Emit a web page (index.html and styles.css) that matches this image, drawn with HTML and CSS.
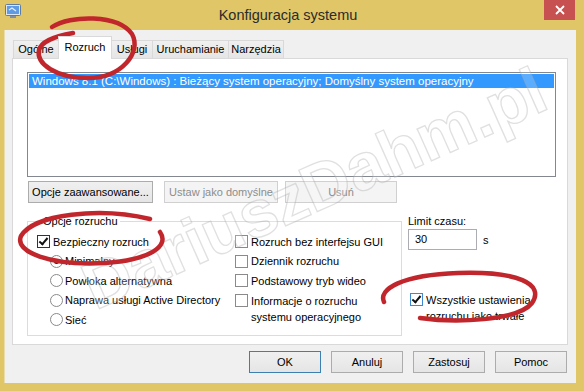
FILE: index.html
```html
<!DOCTYPE html>
<html>
<head>
    <title>Konfiguracja systemu</title>
    <link rel="stylesheet" href="styles.css">
</head>
<body>
<div class="window">
    <div class="titlebar">
        <svg class="app-icon" width="16" height="14" viewBox="0 0 16 14">
            <rect x="0.5" y="0.5" width="15" height="11" rx="1" fill="#dfe6ef" stroke="#5d7ba3"/>
            <rect x="2" y="2" width="12" height="8" fill="#5f9be3"/>
            <path d="M4 6 L7 4 L11 7" stroke="#dcefff" stroke-width="1.2" fill="none"/>
            <rect x="5" y="12" width="6" height="2" fill="#7c8ea8"/>
        </svg>
        <div class="title">Konfiguracja systemu</div>
        <div class="close">
            <svg width="10" height="10" viewBox="0 0 10 10">
                <path d="M1 1 L9 9 M9 1 L1 9" stroke="#fff" stroke-width="1.8"/>
            </svg>
        </div>
    </div>

    <div class="client">
        <div class="tabs">
            <div class="tab w-ogolne">Ogólne</div>
            <div class="tab active">Rozruch</div>
            <div class="tab w-uslugi">Usługi</div>
            <div class="tab w-uruch">Uruchamianie</div>
            <div class="tab w-narz">Narzędzia</div>
        </div>

        <div class="panel">
            <div class="os-list">
                <div class="os-item selected">Windows 8.1 (C:\Windows) : Bieżący system operacyjny; Domyślny system operacyjny</div>
            </div>

            <div class="list-buttons">
                <div class="btn btn-advanced">Opcje zaawansowane...</div>
                <div class="btn disabled btn-default">Ustaw jako domyślne</div>
                <div class="btn disabled btn-remove">Usuń</div>
            </div>

            <div class="lower">
                <fieldset class="group">
                    <legend>Opcje rozruchu</legend>
                    <div class="col col-left">
                        <div class="opt"><span class="check checked"></span>Bezpieczny rozruch</div>
                        <div class="opt sub"><span class="radio on"></span>Minimalny</div>
                        <div class="opt sub"><span class="radio"></span>Powłoka alternatywna</div>
                        <div class="opt sub"><span class="radio"></span>Naprawa usługi Active Directory</div>
                        <div class="opt sub"><span class="radio"></span>Sieć</div>
                    </div>
                    <div class="col">
                        <div class="opt"><span class="check"></span>Rozruch bez interfejsu GUI</div>
                        <div class="opt"><span class="check"></span>Dziennik rozruchu</div>
                        <div class="opt"><span class="check"></span>Podstawowy tryb wideo</div>
                        <div class="opt multi"><span class="check"></span><span>Informacje o rozruchu<br>systemu operacyjnego</span></div>
                    </div>
                </fieldset>

                <div class="side">
                    <div class="side-label">Limit czasu:</div>
                    <div class="timeout">
                        <div class="input">30</div>
                        <span>s</span>
                    </div>
                    <div class="opt multi persist"><span class="check checked hover"></span><span>Wszystkie ustawienia<br>rozruchu jako trwałe</span></div>
                </div>
            </div>
        </div>

        <div class="dialog-buttons">
            <div class="btn btn-dlg default">OK</div>
            <div class="btn btn-dlg">Anuluj</div>
            <div class="btn btn-dlg">Zastosuj</div>
            <div class="btn btn-dlg">Pomoc</div>
        </div>
    </div>

    <!-- watermark and red annotations drawn over the dialog -->
    <div class="watermark">DariuszDahm.pl</div>
    <svg class="marks" width="584" height="391" viewBox="0 0 584 391">
        <path d="M52 27 C70 15, 118 14, 132 34 C142 52, 122 78, 88 78 C56 78, 36 64, 39 50 C41 42, 55 36, 73 33" />
        <path d="M150 219 C100 207, 34 214, 21 236 C14 252, 50 266, 105 263 C150 260, 170 246, 160 232" />
        <path d="M384 302 C378 289, 402 275, 458 273 C518 271, 545 284, 532 303 C518 321, 455 323, 420 318" />
    </svg>
</div>
</body>
</html>
```

FILE: styles.css
```css
/* Windows 8 style dialog */

body {
    margin: 0;
    font-family: "Liberation Sans", Arial, sans-serif;
    font-size: 11px;
    color: #000;
}

.window {
    position: relative;
    width: 584px;
    height: 391px;
    background: #e0c667;
    overflow: hidden;
}

.titlebar {
    display: grid;
    grid-template-columns: 1fr auto 1fr;
    align-items: start;
    height: 30px;
}

.app-icon {
    margin: 4px 0 0 5px;
}

.title {
    font-size: 14.5px;
    color: #2b2b2b;
    padding-top: 7px;
    margin-left: -8px;
}

.close {
    justify-self: end;
    width: 31px;
    height: 20px;
    margin-right: 9px;
    background: #c75050;
    display: flex;
    align-items: center;
    justify-content: center;
}

.client {
    width: 572px;
    height: 353px;
    margin-left: 4px;
    box-sizing: border-box;
    padding: 6px 0 0 7px;
    background: #f0f0f0;
    border-left: 1px solid #e8dcae;
}

/* tabs */

.tabs {
    display: flex;
    align-items: flex-end;
    height: 22px;
    padding-left: 1px;
}

.tab {
    height: 18px;
    box-sizing: border-box;
    border: 1px solid #d9d9d9;
    border-bottom: none;
    background: linear-gradient(#f0f0f0, #e5e5e5);
    text-align: center;
    line-height: 17px;
    margin-left: -1px;
}

.w-ogolne { width: 46px; margin-left: 0; }
.w-uslugi { width: 42px; }
.w-uruch { width: 77px; }
.w-narz { width: 56px; }

.tab.active {
    position: relative;
    z-index: 1;
    width: 54px;
    height: 23px;
    margin-bottom: -1px;
    background: #fff;
    line-height: 20px;
}

.panel {
    width: 556px;
    height: 287px;
    box-sizing: border-box;
    border: 1px solid #d9d9d9;
    background: #fff;
    padding: 13px 11px 0 14px;
}

.os-list {
    height: 105px;
    box-sizing: border-box;
    border: 1px solid #828790;
    padding: 1px 1px;
}

.os-item {
    height: 14px;
    line-height: 14px;
    padding-left: 3px;
    font-size: 11.5px;
    white-space: nowrap;
}

.os-item.selected {
    background: #3399ff;
    color: #fff;
}

/* buttons */

.btn {
    height: 22px;
    box-sizing: border-box;
    border: 1px solid #acacac;
    background: linear-gradient(#f0f0f0, #e5e5e5);
    display: flex;
    align-items: center;
    justify-content: center;
}

.btn.disabled {
    border-color: #d0d0d0;
    background: #f4f4f4;
    color: #8d8d8d;
}

.list-buttons {
    display: flex;
    margin-top: 4px;
    margin-left: 1px;
}

.btn-advanced { width: 125px; }
.btn-default { width: 114px; margin-left: 11px; }
.btn-remove { width: 112px; margin-left: 7px; }

/* options */

.lower {
    display: flex;
    margin-top: 11px;
}

.group {
    margin: 0;
    width: 375px;
    height: 122px;
    box-sizing: border-box;
    border: 1px solid #dcdcdc;
    padding: 4px 0 0 9px;
    display: flex;
}

.group legend {
    padding: 0 2px;
    margin-left: 4px;
    line-height: 14px;
}

.col {
    display: flex;
    flex-direction: column;
}

.col-left {
    width: 198px;
}

.opt {
    height: 19.5px;
    display: flex;
    align-items: center;
    white-space: nowrap;
}

.opt.sub {
    padding-left: 13px;
}

.opt.multi {
    align-items: flex-start;
    line-height: 16px;
    height: auto;
    padding-top: 2px;
}

.opt.multi .check {
    margin-top: 1px;
}

.check {
    width: 13px;
    height: 13px;
    box-sizing: border-box;
    border: 1px solid #8a8a8a;
    background: #fff;
    margin-right: 3px;
    flex: none;
    position: relative;
}

.check.checked {
    border-color: #333;
}

.check.checked::after {
    content: "";
    position: absolute;
    left: 3px;
    top: 0px;
    width: 3px;
    height: 7px;
    border: solid #111;
    border-width: 0 2px 2px 0;
    transform: rotate(40deg);
}

.check.hover {
    border-color: #3c8ad6;
}

.radio {
    width: 13px;
    height: 13px;
    box-sizing: border-box;
    border: 1px solid #8a8a8a;
    border-radius: 50%;
    background: #fff;
    margin-right: 2px;
    flex: none;
    position: relative;
}

.radio.on::after {
    content: "";
    position: absolute;
    left: 3px;
    top: 3px;
    width: 5px;
    height: 5px;
    border-radius: 50%;
    background: #222;
}

.side {
    margin-left: 6px;
    display: flex;
    flex-direction: column;
}

.side-label {
    line-height: 14px;
}

.timeout {
    display: flex;
    align-items: center;
    margin-top: 1px;
}

.input {
    width: 69px;
    height: 21px;
    box-sizing: border-box;
    border: 1px solid #abadb3;
    padding-left: 6px;
    line-height: 19px;
    margin-right: 6px;
}

.persist {
    margin-top: 40px;
    padding-left: 2px;
}

/* dialog buttons */

.dialog-buttons {
    display: flex;
    justify-content: flex-end;
    gap: 10px;
    margin: 6px 9px 0 0;
}

.btn-dlg {
    width: 72px;
}

.btn.default {
    border-color: #3c7fb1;
}

/* overlays */

.watermark {
    position: absolute;
    left: 314px;
    top: 188px;
    transform: translate(-50%, -50%) rotate(-24deg);
    font-family: "Liberation Sans", Arial, sans-serif;
    font-weight: bold;
    font-size: 66px;
    line-height: 1;
    white-space: nowrap;
    color: rgba(255, 255, 255, 0.2);
    -webkit-text-stroke: 1.3px rgba(165, 165, 165, 0.35);
}

.marks {
    position: absolute;
    left: 0;
    top: 0;
    pointer-events: none;
}

.marks path {
    fill: none;
    stroke: #c0262c;
    stroke-width: 4.5;
    stroke-linecap: round;
}
```
